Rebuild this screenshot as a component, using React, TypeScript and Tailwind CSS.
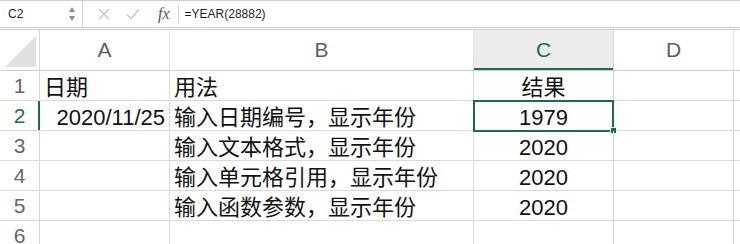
import React from "react";

const COLS = [
  { key: "A", width: "w-[130px]" },
  { key: "B", width: "w-[304px]" },
  { key: "C", width: "w-[140px]" },
  { key: "D", width: "w-[120px]" },
];

type Row = {
  n: number;
  a?: string;
  aAlign?: "left" | "right";
  b?: string;
  c?: string;
};

const ROWS: Row[] = [
  { n: 1, a: "日期", aAlign: "left", b: "用法", c: "结果" },
  { n: 2, a: "2020/11/25", aAlign: "right", b: "输入日期编号，显示年份", c: "1979" },
  { n: 3, b: "输入文本格式，显示年份", c: "2020" },
  { n: 4, b: "输入单元格引用，显示年份", c: "2020" },
  { n: 5, b: "输入函数参数，显示年份", c: "2020" },
  { n: 6 },
];

function FormulaBar() {
  return (
    <div className="flex h-[28px] border-y border-[#cfcfcf] bg-white text-[12px] text-[#1f1f1f]">
      {/* Name box */}
      <div className="flex w-[83px] shrink-0 items-center justify-between border-r border-[#d6d6d6] pl-[8px] pr-[7px]">
        <span>C2</span>
        <div className="flex flex-col items-center gap-[4px]">
          <span className="h-0 w-0 border-x-[3.5px] border-b-[5px] border-x-transparent border-b-[#8a8a8a]" />
          <span className="h-0 w-0 border-x-[3.5px] border-t-[5px] border-x-transparent border-t-[#8a8a8a]" />
        </div>
      </div>

      {/* Buttons */}
      <div className="flex items-center pl-[15px]">
        <svg width="12" height="12" viewBox="0 0 12 12" className="mr-[16px]">
          <path d="M1 1 L11 11 M11 1 L1 11" stroke="#c4c4c4" strokeWidth="1.4" />
        </svg>
        <svg width="14" height="12" viewBox="0 0 14 12" className="mr-[18px]">
          <path d="M1 6.5 L5 10.5 L13 1.5" stroke="#c4c4c4" strokeWidth="1.4" fill="none" />
        </svg>
        <span className="mr-[8px] font-['Liberation_Serif',serif] text-[16px] italic text-[#555]">
          fx
        </span>
        <span className="h-[18px] w-px bg-[#d6d6d6]" />
      </div>

      <div className="flex items-center pl-[6px] font-medium">=YEAR(28882)</div>
    </div>
  );
}

function HeaderRow() {
  return (
    <div className="flex h-[42px] border-y border-[#cfcfcf] bg-white text-[21px] text-[#5f5f5f]">
      {/* Corner */}
      <div className="flex w-[40px] shrink-0 items-end justify-end border-r border-[#d6d6d6] pb-[3px] pr-[3px]">
        <svg width="31" height="31" viewBox="0 0 31 31">
          <path d="M31 0 L31 31 L0 31 Z" fill="#e0e0e0" />
        </svg>
      </div>
      {COLS.map((col) =>
        col.key === "C" ? (
          <div
            key={col.key}
            className={`${col.width} flex shrink-0 items-center justify-center border-r border-[#d6d6d6] bg-[#ececec] text-[#1e6b45] shadow-[inset_0_-2px_0_#1e6b45]`}
          >
            {col.key}
          </div>
        ) : (
          <div
            key={col.key}
            className={`${col.width} flex shrink-0 items-center justify-center border-r border-[#e4e4e4]`}
          >
            {col.key}
          </div>
        )
      )}
      <div className="flex-1" />
    </div>
  );
}

function DataRow({ row }: { row: Row }) {
  const active = row.n === 2;
  return (
    <div className="flex h-[30px] border-b border-[#d9d9d9] text-[22px] leading-[24px] text-[#111]">
      <div
        className={`flex w-[40px] shrink-0 items-center justify-center border-r text-[21px] ${
          active
            ? "border-[#1e6b45] text-[#1e6b45] shadow-[inset_-1px_0_0_#1e6b45]"
            : "border-[#d6d6d6] text-[#666]"
        }`}
      >
        {row.n}
      </div>
      <div
        className={`flex w-[130px] shrink-0 items-end border-r border-[#d9d9d9] px-[4px] ${
          row.aAlign === "right" ? "justify-end" : "justify-start"
        }`}
      >
        {row.a}
      </div>
      <div className="flex w-[304px] shrink-0 items-end border-r border-[#d9d9d9] px-[4px]">
        {row.b}
      </div>
      <div className="relative flex w-[140px] shrink-0 items-end justify-center border-r border-[#d9d9d9]">
        {row.c}
        {active && (
          <>
            <div className="absolute -left-[1px] -top-[1px] h-[32px] w-[141px] border-2 border-[#1e6b45]" />
            <div className="absolute -bottom-[4px] -right-[4px] h-[7px] w-[7px] border border-white bg-[#1e6b45]" />
          </>
        )}
      </div>
      <div className="w-[120px] shrink-0 border-r border-[#d9d9d9]" />
      <div className="flex-1" />
    </div>
  );
}

export default function App() {
  return (
    <div className="h-[244px] w-[740px] overflow-hidden bg-white font-['Liberation_Sans','Noto_Sans_CJK_SC',sans-serif]">
      <FormulaBar />
      <div className="h-px bg-white" />
      <HeaderRow />
      {ROWS.map((row) => (
        <DataRow key={row.n} row={row} />
      ))}
    </div>
  );
}
